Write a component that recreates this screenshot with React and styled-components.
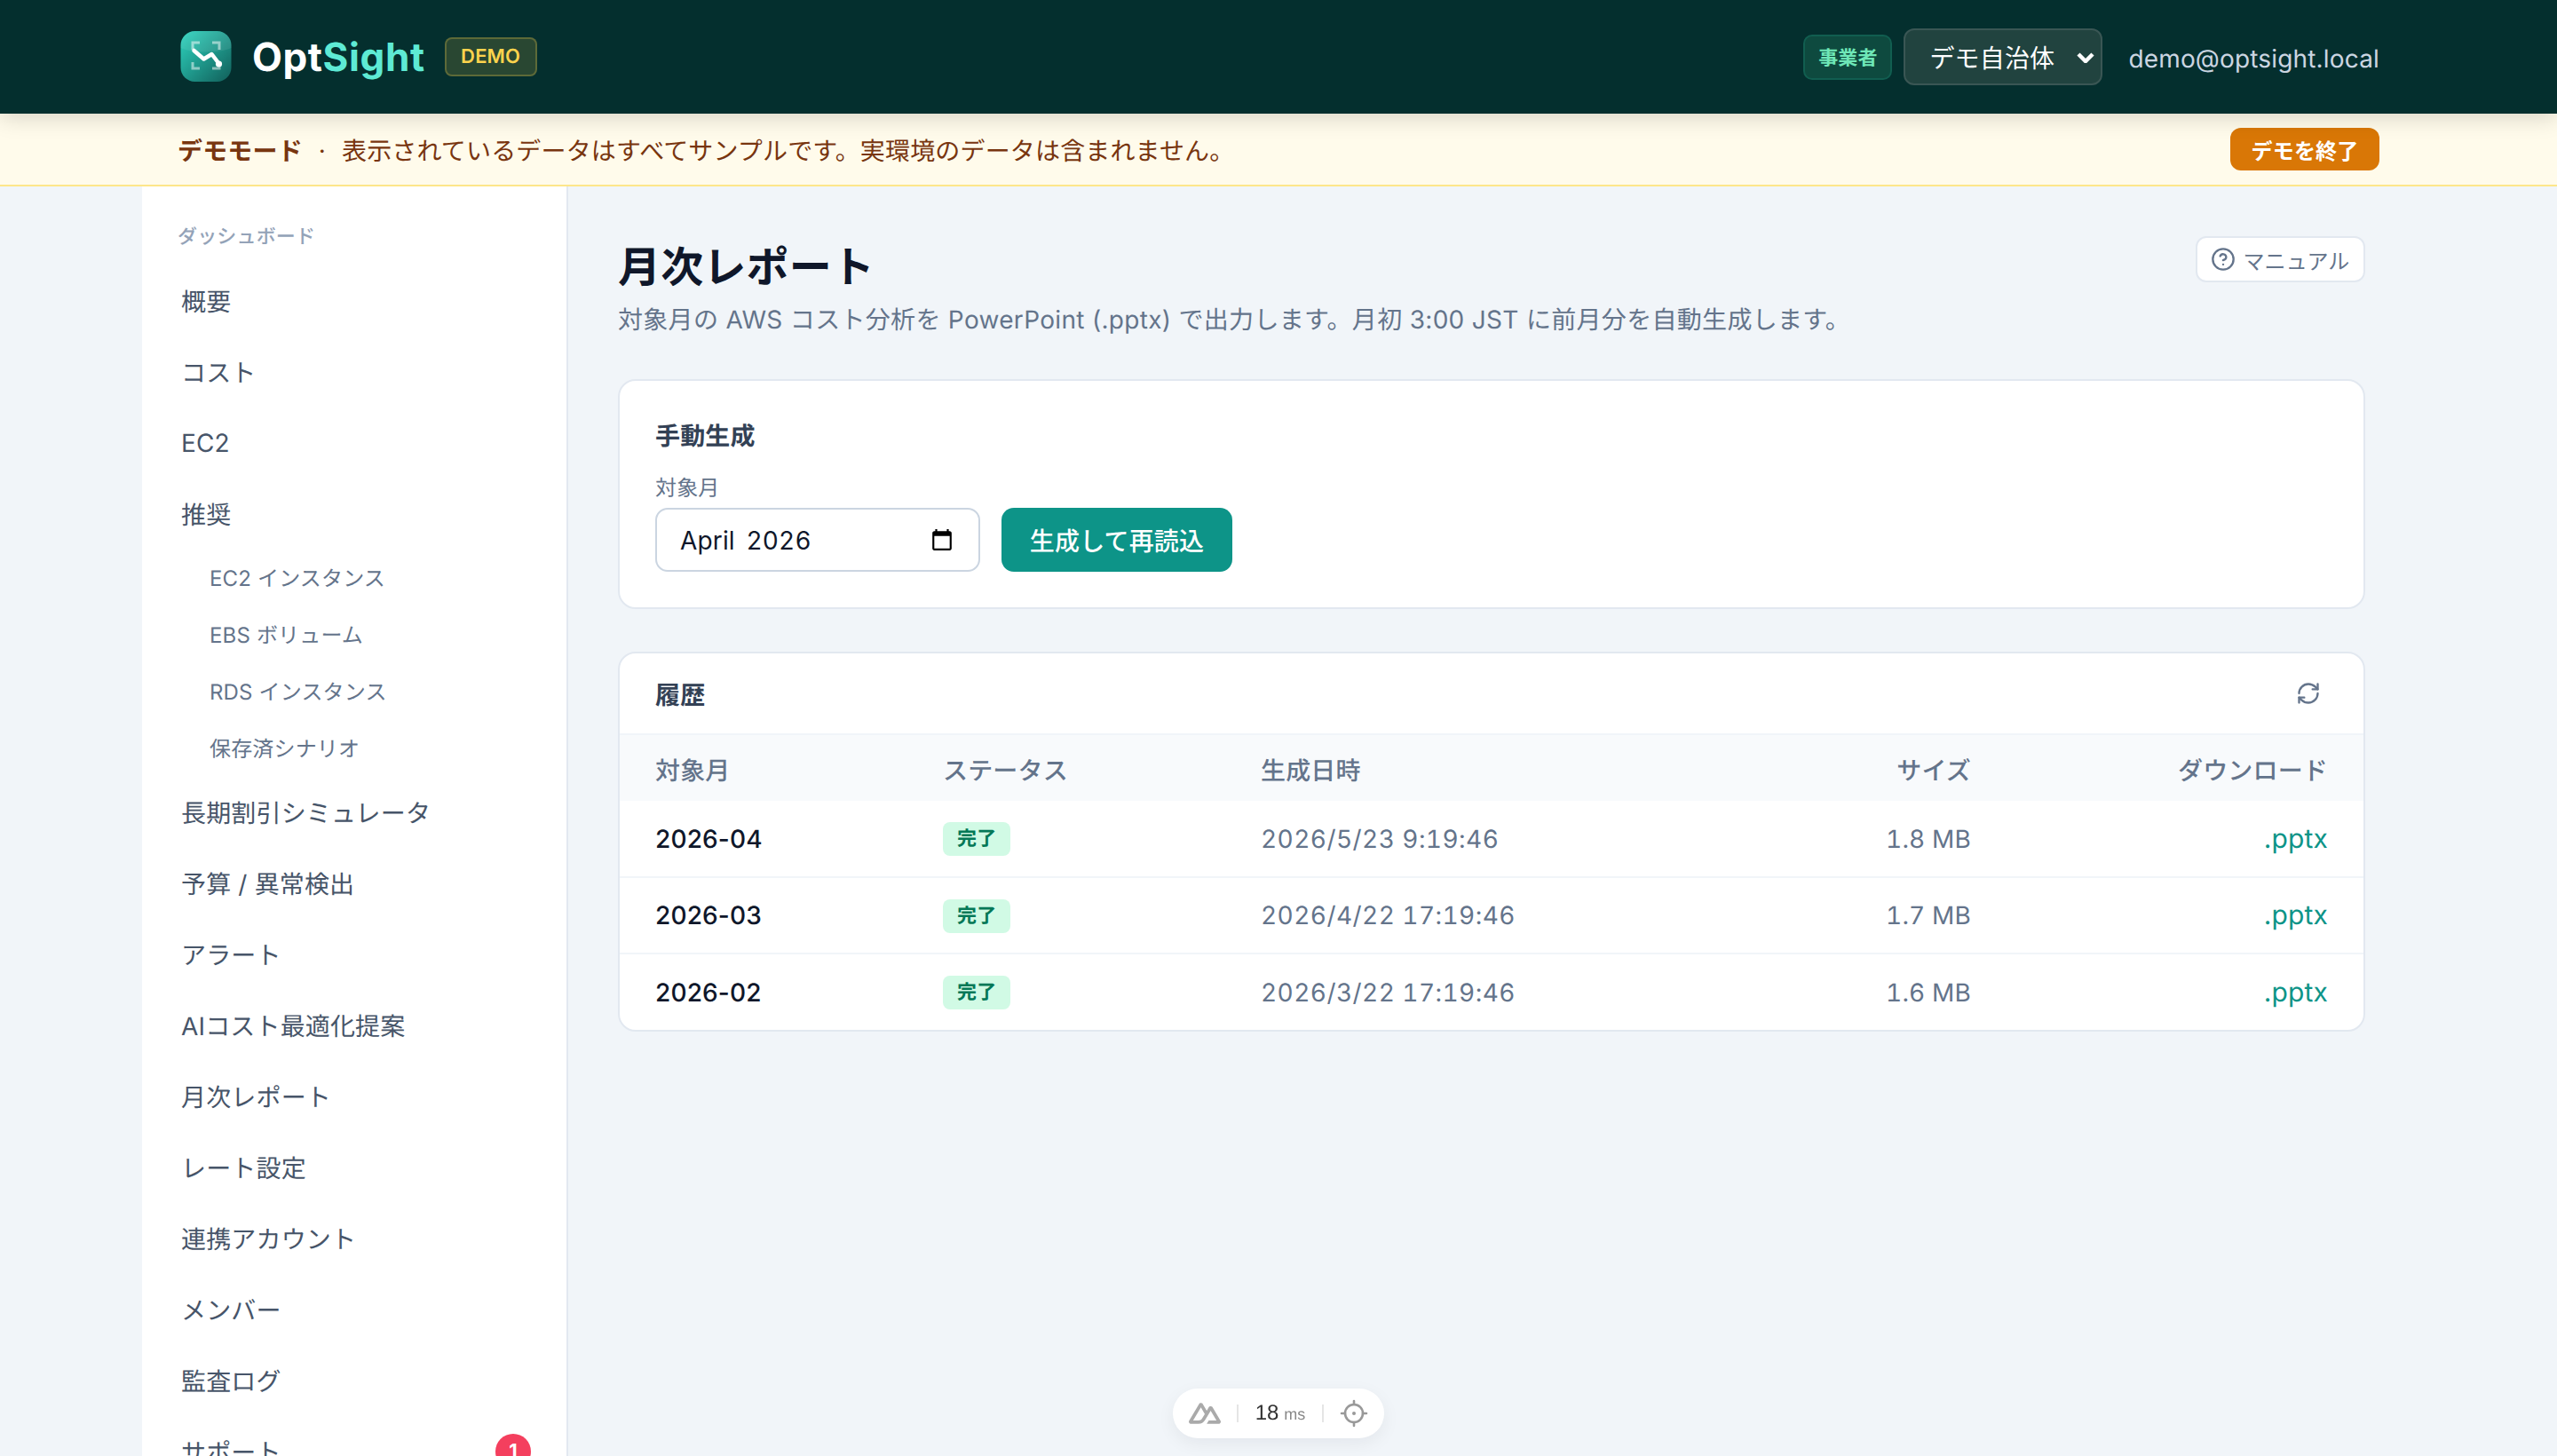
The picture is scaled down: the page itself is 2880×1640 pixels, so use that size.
import styled, { createGlobalStyle } from "styled-components"

const GlobalStyle = createGlobalStyle`
  html, body {
    margin: 0;
    padding: 0;
    height: 100%;
    overflow: hidden;
    background: #f1f5f9;
  }
  * {
    box-sizing: border-box;
  }
  body {
    font-family: Inter, "Noto Sans CJK JP", sans-serif;
    text-rendering: geometricPrecision;
    letter-spacing: 0.01em;
    color: #0f172a;
  }
`

const navBefore = ["概要", "コスト", "EC2", "推奨"]
const navSub = ["EC2 インスタンス", "EBS ボリューム", "RDS インスタンス", "保存済シナリオ"]
const navAfter = [
  "長期割引シミュレータ",
  "予算 / 異常検出",
  "アラート",
  "AIコスト最適化提案",
  "月次レポート",
  "レート設定",
  "連携アカウント",
  "メンバー",
  "監査ログ",
]
const reports = [
  { month: "2026-04", date: "2026/5/23 9:19:46", size: "1.8 MB" },
  { month: "2026-03", date: "2026/4/22 17:19:46", size: "1.7 MB" },
  { month: "2026-02", date: "2026/3/22 17:19:46", size: "1.6 MB" },
]

const LogoMark = () => (
  <svg width="64" height="64" viewBox="0 0 64 64">
    <defs>
      <linearGradient id="logoFill" x1="0" y1="0" x2="1" y2="1">
        <stop offset="0" stopColor="#2dd4bf" />
        <stop offset="1" stopColor="#115e59" />
      </linearGradient>
    </defs>
    <rect x="3.5" y="3" width="57" height="57" rx="16" fill="url(#logoFill)" />
    <path d="M3.5 19a16 16 0 0 1 16-16h25a16 16 0 0 1 16 16v3c-12 6-45 6-57 0z" fill="#fff" opacity="0.08" />
    <g fill="none" stroke="#fff" strokeOpacity="0.5" strokeWidth="3">
      <path d="M17 24v-8h8" />
      <path d="M39 16h8v8" />
      <path d="M47 38v7h-8" />
      <path d="M25 45h-8v-7" />
    </g>
    <path d="M18.5 25l11 9.5 9-5.5 8 10.5" fill="none" stroke="#fff" strokeWidth="4.5" strokeLinecap="round" strokeLinejoin="round" />
    <circle cx="46.5" cy="40" r="3.6" fill="#fff" />
  </svg>
)

const App = () => {
  return (
    <>
      <GlobalStyle />
      <Page>
        <TopBar>
          <TopInner>
            <Brand>
              <LogoMark />
              <BrandName>Opt<span>Sight</span></BrandName>
              <DemoTag>DEMO</DemoTag>
            </Brand>
            <TopRight>
              <RoleTag>事業者</RoleTag>
              <TenantWrap>
                <TenantSelect defaultValue="demo">
                  <option value="demo">デモ自治体</option>
                </TenantSelect>
                <TenantArrow width="20" height="12" viewBox="0 0 20 12" fill="none" stroke="#fff" strokeWidth="4.5">
                  <path d="M2 2l8 8 8-8" />
                </TenantArrow>
              </TenantWrap>
              <UserMail>demo@optsight.local</UserMail>
            </TopRight>
          </TopInner>
        </TopBar>

        <DemoBanner>
          <BannerInner>
            <BannerText>
              <strong>デモモード</strong>
              <BannerDot>·</BannerDot>
              表示されているデータはすべてサンプルです。実環境のデータは含まれません。
            </BannerText>
            <EndDemoButton>デモを終了</EndDemoButton>
          </BannerInner>
        </DemoBanner>

        <Body>
          <Sidebar>
            <SideLabel>ダッシュボード</SideLabel>
            {navBefore.map((name) => (
              <NavItem key={name}>{name}</NavItem>
            ))}
            {navSub.map((name) => (
              <NavSubItem key={name}>{name}</NavSubItem>
            ))}
            {navAfter.map((name) => (
              <NavItem key={name}>{name}</NavItem>
            ))}
            <NavItem>
              サポート
              <NavBadge>1</NavBadge>
            </NavItem>
          </Sidebar>

          <Main>
            <TitleRow>
              <div>
                <PageTitle>月次レポート</PageTitle>
                <PageLead>対象月の AWS コスト分析を PowerPoint (.pptx) で出力します。月初 3:00 JST に前月分を自動生成します。</PageLead>
              </div>
              <ManualButton>
                <svg width="28" height="28" viewBox="0 0 24 24" fill="none" stroke="currentColor" strokeWidth="2" strokeLinecap="round" strokeLinejoin="round">
                  <circle cx="12" cy="12" r="10" />
                  <path d="M9.1 9a3 3 0 0 1 5.8 1c0 2-3 3-3 3" />
                  <path d="M12 17h.01" />
                </svg>
                マニュアル
              </ManualButton>
            </TitleRow>

            <GenerateCard>
              <CardTitle>手動生成</CardTitle>
              <FieldLabel htmlFor="month">対象月</FieldLabel>
              <FieldRow>
                <MonthField>
                  <MonthInput id="month" type="text" defaultValue="April 2026" />
                  <svg width="26" height="26" viewBox="0 0 24 24" fill="#000">
                    <path d="M20 3h-1V1h-2v2H7V1H5v2H4c-1.1 0-2 .9-2 2v16c0 1.1.9 2 2 2h16c1.1 0 2-.9 2-2V5c0-1.1-.9-2-2-2zm0 18H4V8h16v13z" />
                  </svg>
                </MonthField>
                <GenerateButton>生成して再読込</GenerateButton>
              </FieldRow>
            </GenerateCard>

            <HistoryCard>
              <HistoryHead>
                <CardTitle>履歴</CardTitle>
                <ReloadButton>
                  <svg width="28" height="28" viewBox="0 0 24 24" fill="none" stroke="currentColor" strokeWidth="2" strokeLinecap="round" strokeLinejoin="round">
                    <path d="M3 12a9 9 0 0 1 9-9 9.75 9.75 0 0 1 6.74 2.74L21 8" />
                    <path d="M21 3v5h-5" />
                    <path d="M21 12a9 9 0 0 1-9 9 9.75 9.75 0 0 1-6.74-2.74L3 16" />
                    <path d="M8 16H3v5" />
                  </svg>
                </ReloadButton>
              </HistoryHead>
              <Table>
                <colgroup>
                  <col style={{ width: 324 }} />
                  <col style={{ width: 358 }} />
                  <col />
                  <col style={{ width: 240 }} />
                  <col style={{ width: 402 }} />
                </colgroup>
                <thead>
                  <tr>
                    <Th>対象月</Th>
                    <Th>ステータス</Th>
                    <Th>生成日時</Th>
                    <Th $right>サイズ</Th>
                    <Th $right>ダウンロード</Th>
                  </tr>
                </thead>
                <tbody>
                  {reports.map((r) => (
                    <Row key={r.month}>
                      <MonthCell>{r.month}</MonthCell>
                      <Td><StatusTag>完了</StatusTag></Td>
                      <DateCell>{r.date}</DateCell>
                      <SizeCell $right>{r.size}</SizeCell>
                      <Td $right><FileLink>.pptx</FileLink></Td>
                    </Row>
                  ))}
                </tbody>
              </Table>
            </HistoryCard>
          </Main>
        </Body>

        <DevPill>
          <svg width="36" height="36" viewBox="0 0 24 24" fill="#aaaaaa">
            <path d="M13.4642 19.8295h8.9218c.2834 0 .5618-.0723.8072-.2098a1.5899 1.5899 0 0 0 .5908-.5732 1.5293 1.5293 0 0 0 .216-.783 1.529 1.529 0 0 0-.2167-.7828L17.7916 7.4142a1.5904 1.5904 0 0 0-.5907-.573 1.6524 1.6524 0 0 0-.807-.2099c-.2833 0-.5616.0724-.807.2098a1.5904 1.5904 0 0 0-.5907.5731L13.4642 9.99l-2.9954-5.0366a1.5913 1.5913 0 0 0-.591-.573 1.6533 1.6533 0 0 0-.8071-.2098c-.2834 0-.5617.0723-.8072.2097a1.5913 1.5913 0 0 0-.591.573L.2168 17.4808A1.5292 1.5292 0 0 0 0 18.2635c-.0001.2749.0744.545.216.783a1.59 1.59 0 0 0 .5908.5732c.2454.1375.5238.2098.8072.2098h5.6003c2.219 0 3.8554-.9454 4.9813-2.7899l2.7337-4.5922L16.3935 9.99l4.3944 7.3818h-5.8586ZM7.123 17.3694l-3.9083-.0009 5.8586-9.8421 2.9232 4.921-1.9572 3.2892c-.7478 1.1967-1.5972 1.6328-2.9163 1.6328z" />
          </svg>
          <PillDivider />
          <PillTime>18<small>ms</small></PillTime>
          <PillDivider />
          <svg width="32" height="32" viewBox="0 0 32 32" fill="none" stroke="#999999" strokeWidth="2.6" strokeLinecap="round">
            <circle cx="16" cy="16" r="10" />
            <path d="M16 2v4M16 26v4M2 16h4M26 16h4" />
            <circle cx="16" cy="16" r="2" fill="#999999" stroke="none" />
          </svg>
        </DevPill>
      </Page>
    </>
  )
}

export default App

const Page = styled.div`
  height: 100vh;
  display: flex;
  flex-direction: column;
  overflow: hidden;
`
const TopBar = styled.header`
  position: relative;
  z-index: 2;
  flex: none;
  height: 128px;
  background: #042f2e;
  box-shadow: 0 4px 24px rgba(0, 0, 0, 0.16);
`
const TopInner = styled.div`
  max-width: 2560px;
  height: 100%;
  margin: 0 auto;
  padding: 0 40px;
  display: flex;
  align-items: center;
  justify-content: space-between;
`
const Brand = styled.div`
  display: flex;
  align-items: center;
`
const BrandName = styled.span`
  margin-left: 20px;
  font-size: 44px;
  font-weight: 700;
  letter-spacing: 0.6px;
  color: #fff;
  span {
    color: #5eead4;
  }
`
const DemoTag = styled.span`
  margin-left: 22px;
  width: 104px;
  height: 44px;
  display: flex;
  align-items: center;
  justify-content: center;
  font-size: 22px;
  font-weight: 600;
  color: #fcd34d;
  background: rgba(252, 211, 77, 0.15);
  border: 2px solid rgba(252, 211, 77, 0.25);
  border-radius: 8px;
`
const TopRight = styled.div`
  display: flex;
  align-items: center;
`
const RoleTag = styled.span`
  width: 100px;
  height: 51px;
  display: flex;
  align-items: center;
  justify-content: center;
  font-size: 22px;
  font-weight: 700;
  color: #6ee7b7;
  background: #0e4a3f;
  border: 2px solid #115e50;
  border-radius: 10px;
`
const TenantWrap = styled.div`
  position: relative;
  margin-left: 13px;
  display: flex;
`
const TenantSelect = styled.select`
  appearance: none;
  width: 224px;
  height: 64px;
  padding: 4px 27px 0;
  font: inherit;
  font-size: 28px;
  letter-spacing: inherit;
  color: #fff;
  background: #21433f;
  border: 2px solid #3a5654;
  border-radius: 12px;
`
const TenantArrow = styled.svg`
  position: absolute;
  right: 9px;
  top: 27px;
  pointer-events: none;
`
const UserMail = styled.span`
  margin-left: 29px;
  padding-top: 4px;
  font-size: 28px;
  color: #cbd5e1;
`
const DemoBanner = styled.div`
  flex: none;
  height: 82px;
  background: #fffbeb;
  border-bottom: 2px solid #fde68a;
`
const BannerInner = styled.div`
  max-width: 2560px;
  height: 100%;
  margin: 0 auto;
  padding: 0 40px;
  display: flex;
  align-items: center;
  justify-content: space-between;
`
const BannerText = styled.div`
  padding-top: 1px;
  font-size: 28px;
  color: #78350f;
`
const BannerDot = styled.span`
  margin: 0 18px;
`
const EndDemoButton = styled.button`
  width: 168px;
  height: 48px;
  padding: 0;
  border: 0;
  border-radius: 12px;
  font: inherit;
  font-size: 24px;
  font-weight: 700;
  letter-spacing: inherit;
  color: #fff;
  background: #d97706;
`
const Body = styled.div`
  flex: 1;
  width: 2560px;
  margin: 0 auto;
  min-height: 0;
  display: flex;
`
const Sidebar = styled.nav`
  flex: none;
  position: relative;
  width: 480px;
  padding: 36px 20px 0 24px;
  background: #fff;
  border-right: 2px solid #e2e8f0;
  overflow: hidden;
`
const SideLabel = styled.div`
  height: 53px;
  margin-left: 16px;
  padding-top: 2px;
  line-height: 38px;
  font-size: 22px;
  color: #94a3b8;
  font-weight: 500;
`
const NavItem = styled.div`
  height: 80px;
  padding: 0 20px;
  display: flex;
  align-items: center;
  justify-content: space-between;
  font-size: 28px;
  color: #475569;
`
const NavSubItem = styled.div`
  height: 64px;
  padding: 0 0 4px 52px;
  display: flex;
  align-items: center;
  font-size: 24px;
  color: #64748b;
`
const NavBadge = styled.span`
  width: 40px;
  height: 40px;
  border-radius: 50%;
  display: flex;
  align-items: center;
  justify-content: center;
  font-size: 22px;
  font-weight: 700;
  color: #fff;
  background: #f43f5e;
`
const Main = styled.main`
  flex: 1;
  min-width: 0;
  padding: 56px 56px 0;
`
const TitleRow = styled.div`
  display: flex;
  align-items: flex-start;
  justify-content: space-between;
`
const PageTitle = styled.h1`
  margin: 3px 0 0;
  font-size: 48px;
  line-height: 64px;
  font-weight: 700;
  color: #0f172a;
`
const PageLead = styled.p`
  margin: 7px 0 0;
  font-size: 28px;
  line-height: 40px;
  letter-spacing: 0.31px;
  color: #64748b;
`
const ManualButton = styled.button`
  width: 191px;
  height: 52px;
  padding: 0;
  display: flex;
  align-items: center;
  justify-content: center;
  gap: 8px;
  font: inherit;
  font-size: 24px;
  letter-spacing: inherit;
  color: #64748b;
  background: #fff;
  border: 2px solid #e2e8f0;
  border-radius: 12px;
`
const GenerateCard = styled.section`
  margin-top: 47px;
  padding: 42px 40px 40px;
  background: #fff;
  border: 2px solid #e2e8f0;
  border-radius: 20px;
`
const CardTitle = styled.h2`
  margin: 0;
  font-size: 28px;
  line-height: 40px;
  font-weight: 700;
  color: #334155;
`
const FieldLabel = styled.label`
  display: block;
  margin-top: 23px;
  font-size: 24px;
  line-height: 32px;
  color: #64748b;
`
const FieldRow = styled.div`
  margin-top: 6px;
  display: flex;
  align-items: center;
  gap: 24px;
`
const MonthField = styled.div`
  width: 366px;
  height: 72px;
  padding: 0 28px 0 26px;
  display: flex;
  align-items: center;
  background: #fff;
  border: 2px solid #cbd5e1;
  border-radius: 14px;
`
const MonthInput = styled.input`
  flex: 1;
  min-width: 0;
  padding: 2px 0 0;
  border: 0;
  outline: 0;
  font: inherit;
  font-size: 28px;
  word-spacing: 5px;
  letter-spacing: inherit;
  font-variant-numeric: tabular-nums;
  color: #0f172a;
  background: none;
`
const GenerateButton = styled.button`
  width: 260px;
  height: 72px;
  padding: 0;
  border: 0;
  border-radius: 14px;
  font: inherit;
  font-size: 28px;
  font-weight: 500;
  letter-spacing: inherit;
  color: #fff;
  background: #0d9488;
`
const HistoryCard = styled.section`
  margin-top: 48px;
  background: #fff;
  border: 2px solid #e2e8f0;
  border-radius: 20px;
  overflow: hidden;
`
const HistoryHead = styled.div`
  height: 92px;
  padding: 0 48px 0 40px;
  display: flex;
  align-items: center;
  justify-content: space-between;
  border-bottom: 2px solid #f1f5f9;
  h2 {
    padding-top: 4px;
  }
`
const ReloadButton = styled.button`
  padding: 0;
  display: flex;
  border: 0;
  background: none;
  color: #64748b;
`
const Table = styled.table`
  width: 100%;
  table-layout: fixed;
  border-collapse: collapse;
`
const Th = styled.th`
  height: 74px;
  padding: 3px 40px 0;
  font-size: 28px;
  font-weight: 500;
  color: #64748b;
  background: #f8fafc;
  text-align: ${(p) => (p.$right ? "right" : "left")};
`
const Row = styled.tr`
  height: 86px;
  & + & {
    border-top: 2px solid #f1f5f9;
  }
`
const Td = styled.td`
  padding: 0 40px;
  font-size: 28px;
  color: #64748b;
  text-align: ${(p) => (p.$right ? "right" : "left")};
`
const MonthCell = styled(Td)`
  color: #0f172a;
  font-weight: 500;
`
const DateCell = styled(Td)`
  font-variant-numeric: tabular-nums;
  letter-spacing: 0.45px;
`
const SizeCell = styled(Td)`
  font-variant-numeric: tabular-nums;
`
const StatusTag = styled.span`
  display: inline-block;
  padding: 0 16px;
  height: 38px;
  line-height: 38px;
  font-size: 22px;
  font-weight: 700;
  color: #047857;
  background: #d1fae5;
  border-radius: 8px;
`
const FileLink = styled.a`
  font-size: 30px;
  color: #0d9488;
`
const DevPill = styled.div`
  position: fixed;
  left: 1321px;
  bottom: 20px;
  width: 238px;
  height: 56px;
  padding: 0 18px;
  display: flex;
  align-items: center;
  justify-content: space-between;
  background: #fff;
  border-radius: 28px;
  box-shadow: 0 6px 20px rgba(15, 23, 42, 0.06);
`
const PillDivider = styled.span`
  width: 2px;
  height: 20px;
  background: #e5e5e5;
`
const PillTime = styled.span`
  font-family: "Liberation Sans", sans-serif;
  font-size: 24px;
  letter-spacing: 0;
  color: #333;
  small {
    margin-left: 6px;
    font-size: 18px;
    color: #888;
  }
`
